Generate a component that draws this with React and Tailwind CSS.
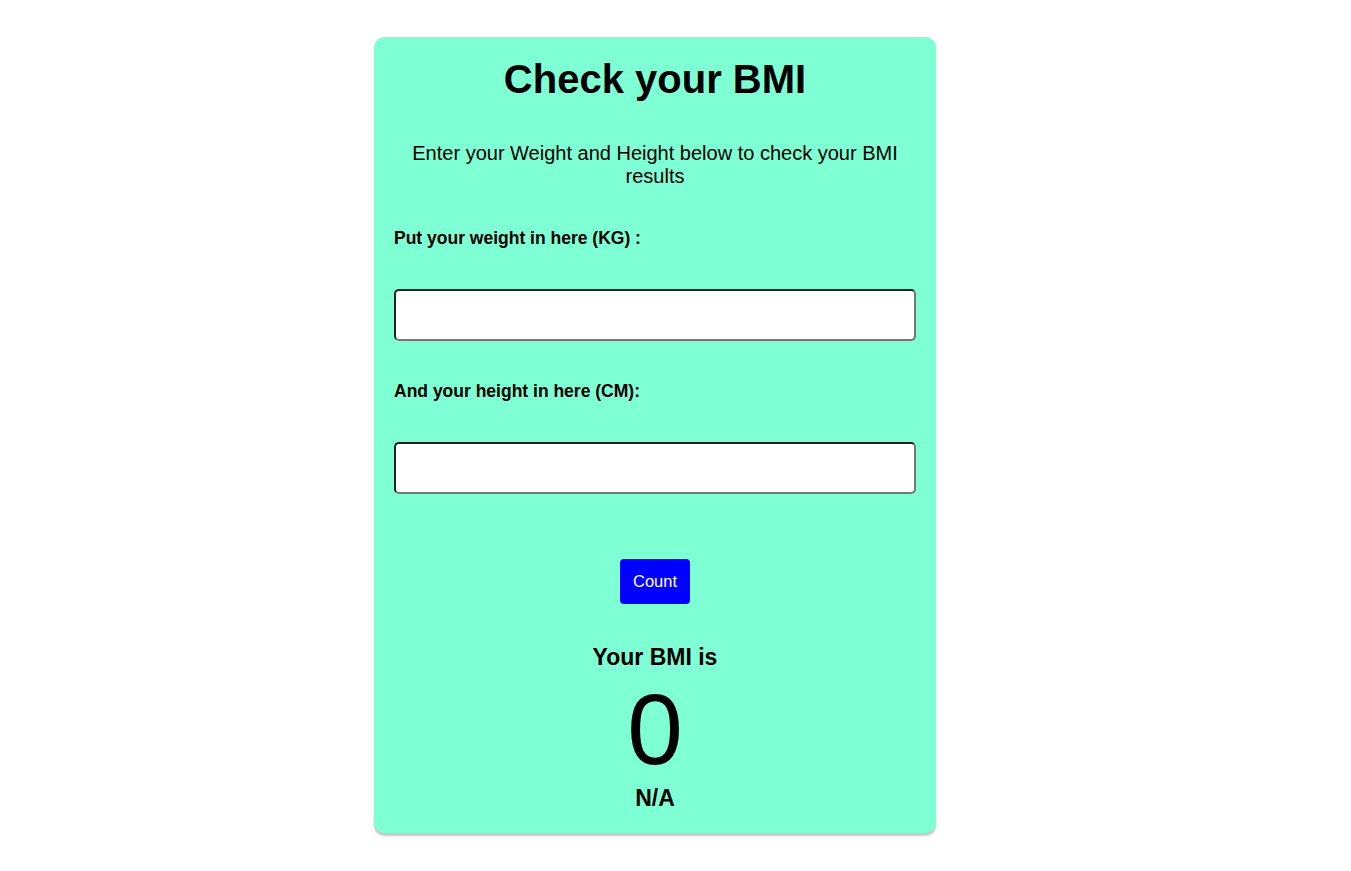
import React, { useState } from "react";

const App = () => {
  const [weight, setWeight] = useState("");
  const [height, setHeight] = useState("");
  const [bmi, setBmi] = useState(0);
  const [status, setStatus] = useState("N/A");

  const count = () => {
    const w = parseFloat(weight);
    const h = parseFloat(height) / 100;
    if (!w || !h) {
      setBmi(0);
      setStatus("N/A");
      return;
    }
    const val = w / (h * h);
    setBmi(val.toFixed(1));
    if (val < 18.5) setStatus("Underweight");
    else if (val < 25) setStatus("Normal");
    else if (val < 30) setStatus("Overweight");
    else setStatus("Obese");
  };

  return (
    <div className="min-h-screen bg-white pt-[37px] pb-[37px] font-['Liberation_Sans',Arial,sans-serif] text-black">
      {/* --- Card --- */}
      <div className="ml-[374px] w-[562px] bg-[#7fffd4] rounded-[10px] shadow-[0_3px_2px_rgba(0,0,0,0.22)] px-5 pt-[19px] pb-[22px] flex flex-col">
        <h1 className="text-center text-[40px] leading-[46px] font-bold">
          Check your BMI
        </h1>
        <p className="mt-[40px] text-center text-[20px] leading-[23px] px-[14px]">
          Enter your Weight and Height below to check your BMI results
        </p>

        <label className="mt-[40px] text-[17.5px] leading-[20px] font-bold">
          Put your weight in here (KG) :
        </label>
        <input
          type="text"
          value={weight}
          onChange={(e) => setWeight(e.target.value)}
          className="mt-[41px] h-[52px] w-full bg-white rounded-[5px] border-2 [border-style:inset] border-[#767676] px-2 outline-none"
        />

        <label className="mt-[40px] text-[17.5px] leading-[20px] font-bold">
          And your height in here (CM):
        </label>
        <input
          type="text"
          value={height}
          onChange={(e) => setHeight(e.target.value)}
          className="mt-[41px] h-[52px] w-full bg-white rounded-[5px] border-2 [border-style:inset] border-[#767676] px-2 outline-none"
        />

        <div className="mt-[65px] flex justify-center">
          <button
            onClick={count}
            className="w-[70px] h-[45px] bg-[#0000ff] text-white text-[16.5px] rounded-[4px]"
          >
            Count
          </button>
        </div>

        {/* --- Result --- */}
        <div className="mt-[40px] text-center text-[23px] leading-[26px] font-bold">
          Your BMI is
        </div>
        <div className="mt-[9px] text-center text-[100px] leading-[100px]">
          {bmi}
        </div>
        <div className="mt-[7px] text-center text-[23px] leading-[25px] font-bold">
          {status}
        </div>
      </div>
    </div>
  );
};

export default App;
